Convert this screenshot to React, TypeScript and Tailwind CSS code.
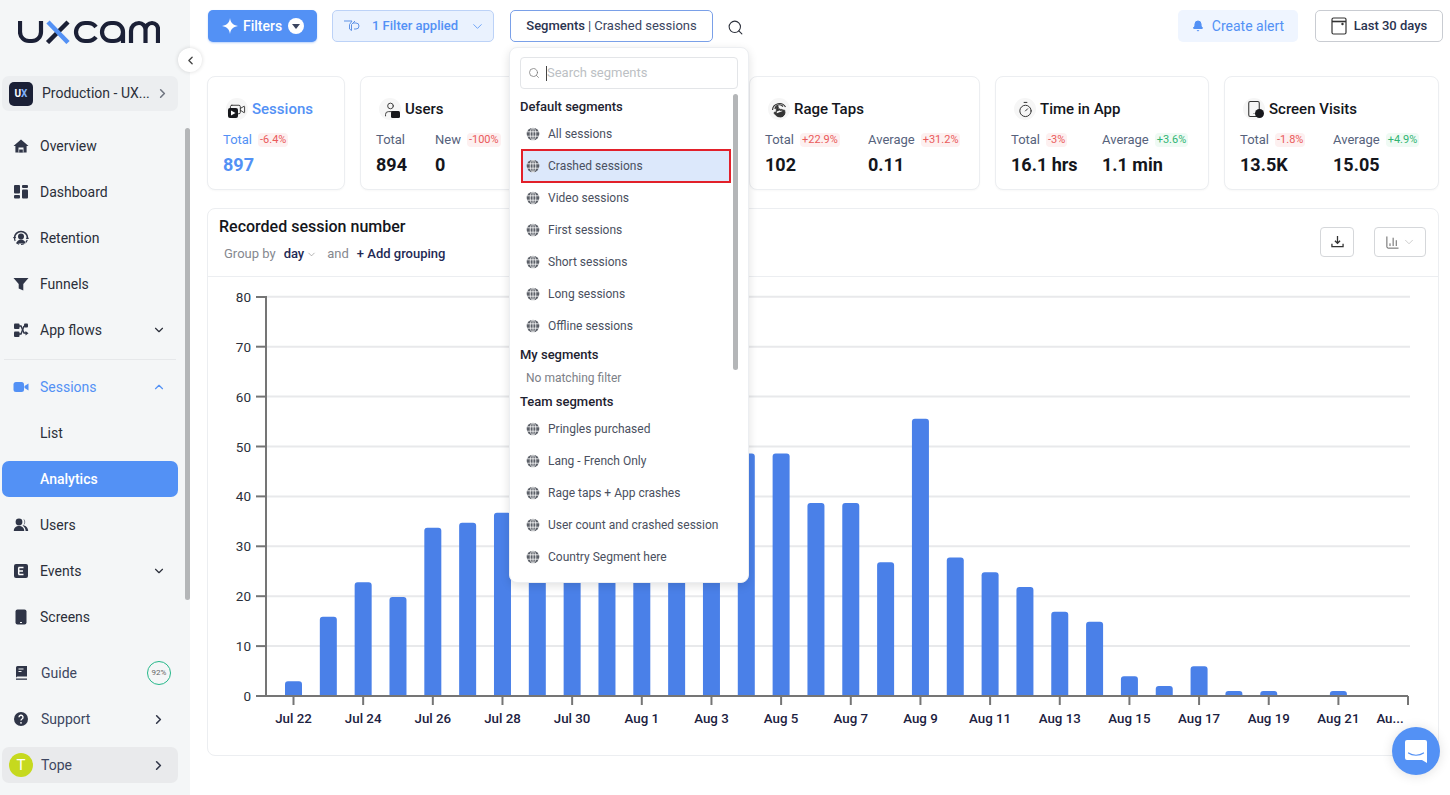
import React from "react";
import { ChevronRight, ChevronDown, ChevronUp, ChevronLeft, Search, Bell, Video, User, Timer, Smartphone, ChartColumn, Pointer } from "lucide-react";

const HomeIco = () => (
  <svg width="16" height="16" viewBox="0 0 16 16"><path d="M8 1.500 15.500 8H13.600v6.500H2.400V8H.5z" fill="#2f3547" /><rect x="5.500" y="9.500" width="5" height="5" fill="#f4f6f7" /><rect x="6.200" y="11.500" width="3.600" height="3" fill="#2f3547" /></svg>
);
const DashIco = () => (
  <svg width="16" height="16" viewBox="0 0 16 16" fill="#2f3547"><rect x="1" y="1" width="6" height="8.500" rx="1" /><rect x="1" y="11" width="6" height="3.600" rx="1" /><rect x="9" y="1" width="6" height="3" rx="1" /><rect x="9" y="5.500" width="6" height="9" rx="1" /></svg>
);
const RetIco = () => (
  <svg width="16" height="16" viewBox="0 0 16 16"><path d="M1.500 8a6.500 6.500 0 0 1 13 0" fill="none" stroke="#2f3547" strokeWidth="1.600" /><path d="M1.500 8a6.500 6.500 0 0 0 13 0" fill="none" stroke="#2f3547" strokeWidth="1.200" strokeDasharray="3 2" /><circle cx="8" cy="6.500" r="3" fill="#2f3547" /><path d="M3.500 13.500c.5-3 2.500-4 4.500-4s4 1 4.500 4z" fill="#2f3547" /><path d="M0 7h3.200L1.600 9.500zM12.800 9h3.200l-1.600-2.500z" fill="#2f3547" /></svg>
);
const FunnelIco = () => (
  <svg width="16" height="16" viewBox="0 0 16 16"><path d="M.5 2h15l-5.200 6v6.500l-4.600-2V8z" fill="#2f3547" /></svg>
);
const FlowIco = () => (
  <svg width="16" height="16" viewBox="0 0 16 16" fill="#2f3547"><rect x="1" y="1.500" width="5.500" height="5.500" rx="1" /><rect x="1" y="9.500" width="5.500" height="5.500" rx="1" /><rect x="11" y="1.500" width="4" height="4" rx="1" /><path d="M5 4h3l3 7h2" fill="none" stroke="#2f3547" strokeWidth="1.400" /><path d="M5 12h3l3-8" fill="none" stroke="#2f3547" strokeWidth="1.400" /><path d="M12.500 9l3 2.200-3 2.200z" /></svg>
);
const CamIco = () => (
  <svg width="16" height="16" viewBox="0 0 16 16" fill="#5391f5"><rect x="0.5" y="3" width="10.500" height="10" rx="2.500" /><path d="M11.500 7l4-2.600v7.200l-4-2.600z" /></svg>
);
const UsersIco = () => (
  <svg width="16" height="16" viewBox="0 0 16 16" fill="#2f3547"><circle cx="6" cy="5" r="3.400" /><path d="M0.800 14c0-3.300 2.300-5 5.200-5s5.200 1.700 5.200 5z" /><path d="M10 1.800a3.400 3.400 0 0 1 0 6.400c2.800.6 5 2 5.200 5.800h-2.600c0-2.300-1-4-3-5.500a4 4 0 0 0 .4-6.700z" /></svg>
);
const EventIco = () => (
  <svg width="16" height="16" viewBox="0 0 16 16"><rect x="1" y="1" width="14" height="14" rx="2" fill="#2f3547" /><path d="M5.500 4.500h5M5.500 8h4.500M5.500 11.500h5M5.700 4.500v7" stroke="#fff" strokeWidth="1.500" fill="none" /></svg>
);
const ScreenIco = () => (
  <svg width="16" height="16" viewBox="0 0 16 16"><rect x="2.500" y="0.500" width="11" height="15" rx="2" fill="#2f3547" /><rect x="7" y="13" width="2" height="1" fill="#f4f6f7" /></svg>
);
const BookIco = () => (
  <svg width="16" height="16" viewBox="0 0 16 16"><path d="M3 2.500A1.500 1.500 0 0 1 4.500 1H14v10.500H4.500A1.500 1.500 0 0 0 3 13z" fill="#2f3547" /><rect x="3" y="13.500" width="11" height="1.300" fill="#2f3547" /><path d="M5.500 4h5M5.500 6.500h3" stroke="#f4f6f7" strokeWidth="1.100" /></svg>
);
const HelpIco = () => (
  <svg width="16" height="16" viewBox="0 0 16 16"><circle cx="8" cy="8" r="7" fill="#2f3547" /><path d="M6 6.300a2 2 0 1 1 3 1.700c-.7.400-1 .8-1 1.600" stroke="#fff" strokeWidth="1.400" fill="none" /><circle cx="8" cy="11.800" r=".9" fill="#fff" /></svg>
);
const Globe = () => (
  <svg width="14" height="14" viewBox="0 0 14 14" className="shrink-0"><circle cx="7" cy="7" r="6.300" fill="#5c6068" /><ellipse cx="7" cy="7" rx="2.800" ry="6.300" fill="none" stroke="#fff" strokeWidth=".8" /><path d="M.7 4.800h12.600M.7 9.200h12.600M7 .7v12.600" stroke="#fff" strokeWidth=".8" /></svg>
);

const Logo = () => (
  <svg width="142" height="24" viewBox="0 0 142 24" fill="none" strokeWidth="4.200">
    <path d="M2 1v11a9 9 0 0 0 9 9h3a9 9 0 0 0 9-9V1" stroke="#1b2036" />
    <path d="M29.500 22.500 50 2" stroke="#1b2036" strokeWidth="4.500" />
    <path d="M30 2l20 20.500" stroke="#5391f5" strokeWidth="4.500" />
    <path d="M78 7a10 9 0 0 0-8-4h-3a9 9 0 0 0 0 18h3a10 9 0 0 0 8-4" stroke="#1b2036" />
    <path d="M105 12a9 9 0 0 0-9-9h-3a9 9 0 0 0 0 18h3a9 9 0 0 0 9-9v11" stroke="#1b2036" />
    <path d="M113 23V11a8 8 0 0 1 8-8a6.500 6.500 0 0 1 6.500 6.500V23M127.500 9.500a6.500 6.500 0 0 1 6.500-6.500a6 6 0 0 1 6 6.500V23" stroke="#1b2036" />
  </svg>
);

function NavRow({ icon, label, trail, active, accent, tall }: { icon?: React.ReactNode; label: string; trail?: React.ReactNode; active?: boolean; accent?: boolean; tall?: boolean }) {
  return (
    <div className="h-[46px] py-[5px] pl-[2px] pr-[12px]">
      <div className={`flex h-[36px] items-center rounded-[7px] pl-[11px] pr-[12px] ${active ? "bg-[#5391f5]" : ""}`}>
        <span className="flex w-[16px] shrink-0 justify-center">{icon}</span>
        <span className={`${tall ? "ml-[12px]" : "ml-[11px]"} flex-1 text-[14px] ${active ? "font-medium text-white" : accent ? "text-[#5391f5]" : tall ? "text-[#3d4660]" : "text-[#2b2f3a]"}`}>{label}</span>
        {trail}
      </div>
    </div>
  );
}

function Metric({ label, value, delta, w, blue }: { label: string; value: string; delta?: string; w: string; blue?: boolean }) {
  const up = delta?.startsWith("+3.6") || delta?.startsWith("+4.9");
  return (
    <div className={w}>
      <div className="flex h-[20px] items-center gap-[6px]">
        <span className={`text-[13px] ${blue ? "text-[#5391f5]" : "text-[#56627c]"}`}>{label}</span>
        {delta ? <span className={`rounded-[4px] px-[2px] text-[11px] leading-[14px] ${up ? "bg-[#effaf4] text-[#2fb573]" : "bg-[#fdf0f0] text-[#ea5a5a]"}`}>{delta}</span> : null}
      </div>
      <div className={`mt-[3px] whitespace-nowrap text-[18px] font-bold leading-[24px] ${blue ? "text-[#5391f5]" : "text-[#14161c]"}`}>{value}</div>
    </div>
  );
}

function Card({ w, icon, title, blue, children }: { w: string; icon: React.ReactNode; title: string; blue?: boolean; children: React.ReactNode }) {
  return (
    <div className={`${w} h-[114px] shrink-0 rounded-[8px] border border-[#eceef1] bg-white pl-[15px] pt-[21px] shadow-[0_1px_2px_rgba(0,0,0,0.03)]`}>
      <div className="flex h-[22px] items-center">
        <span className="ml-[3px] flex h-[22px] w-[22px] items-center justify-center rounded-full bg-[#f6f6f6]">{icon}</span>
        <span className={`ml-[4px] text-[15px] font-medium ${blue ? "text-[#5391f5]" : "text-[#14161c]"}`}>{title}</span>
      </div>
      <div className="mt-[10px] flex">{children}</div>
    </div>
  );
}

function SegRow({ label, selected }: { label: string; selected?: boolean }) {
  return (
    <div className={`flex items-center text-[12px] text-[#4a5060] ${selected ? "-my-[1px] ml-[1px] mr-[7px] h-[34px] border-2 border-[#e2202a] bg-[#dce8fb] pl-[3px]" : "h-[32px] pl-[6px]"}`}>
      <Globe />
      <span className="ml-[8px]">{label}</span>
    </div>
  );
}

const values = [3, 16, 23, 20, 34, 35, 37, 37, 38, 40, 40, 42, 44, 49, 49, 39, 39, 27, 56, 28, 25, 22, 17, 15, 4, 2, 6, 1, 1, 0, 1];
const labels = ["Jul 22", "Jul 24", "Jul 26", "Jul 28", "Jul 30", "Aug 1", "Aug 3", "Aug 5", "Aug 7", "Aug 9", "Aug 11", "Aug 13", "Aug 15", "Aug 17", "Aug 19", "Aug 21"];

function Chart() {
  const y = (v: number) => 696 - v * 4.99;
  const by = (v: number) => 696 - v * 4.95;
  const x = (i: number) => 293.5 + i * 34.83;
  return (
    <svg width="1230" height="478" viewBox="208 277 1230 478" className="block">
      {[10, 20, 30, 40, 50, 60, 70, 80].map((v) => (
        <line key={v} x1="266" x2="1410" y1={y(v)} y2={y(v)} stroke="#e8e9eb" strokeWidth="2" />
      ))}
      {values.map((v, i) =>
        v > 0 ? <path key={i} d={`M${x(i) - 8.5} 696V${by(v) + 3}a3 3 0 0 1 3-3h11a3 3 0 0 1 3 3V696z`} fill="#4a80e8" /> : null
      )}
      <path d="M256 297H266V696M256 696H1408" fill="none" stroke="#757575" strokeWidth="2" />
      {[10, 20, 30, 40, 50, 60, 70].map((v) => (
        <line key={v} x1="256" x2="266" y1={y(v)} y2={y(v)} stroke="#757575" strokeWidth="2" />
      ))}
      {[0, 10, 20, 30, 40, 50, 60, 70, 80].map((v) => (
        <text key={v} x="251" y={y(v) + 5} textAnchor="end" fontSize="13.5" fill="#2b2f3a">{v}</text>
      ))}
      {labels.map((l, i) => (
        <g key={l}>
          <line x1={x(i * 2)} x2={x(i * 2)} y1="696" y2="705" stroke="#757575" strokeWidth="2" />
          <text x={x(i * 2)} y="723" textAnchor="middle" fontSize="13.3" fontWeight="500" fill="#1c2140">{l}</text>
        </g>
      ))}
      <line x1="1408" x2="1408" y1="696" y2="705" stroke="#757575" strokeWidth="2" />
      <text x="1390" y="723" textAnchor="middle" fontSize="13.3" fontWeight="500" fill="#1c2140">Au...</text>
    </svg>
  );
}

const SessionIcon = () => (
  <span className="relative flex h-[18px] w-[18px] items-center justify-center">
    <Video size={17} strokeWidth={1.3} className="text-[#333]" />
    <span className="absolute bottom-0 left-0 flex h-[10px] w-[10px] items-center justify-center rounded-[2px] bg-[#17181c]">
      <svg width="6" height="6" viewBox="0 0 6 6"><path d="M1 .5 5.500 3 1 5.500z" fill="#fff" /></svg>
    </span>
  </span>
);
const UserIcon = () => (
  <span className="relative flex h-[18px] w-[18px] items-center justify-center">
    <User size={17} strokeWidth={1.3} className="text-[#333]" />
    <span className="absolute -right-[1px] bottom-0 h-[7px] w-[9px] rounded-[1.5px] bg-[#17181c]" />
  </span>
);
const RageIcon = () => (
  <span className="relative flex h-[20px] w-[20px] items-center justify-center">
    <svg width="20" height="20" viewBox="0 0 20 20" fill="none" stroke="#333" className="absolute inset-0"><path d="M3.500 11a7 7 0 0 1 13 -3" strokeWidth="1.200" /><path d="M6 10a4.500 4.500 0 0 1 8-2.500" strokeWidth="1.200" /></svg>
    <Pointer size={13} fill="#333" strokeWidth={1.2} className="relative mt-[5px] text-[#333]" />
  </span>
);

export default function App() {
  return (
    <div className="relative flex h-[795px] w-[1450px] overflow-hidden bg-white font-[Roboto,sans-serif]">
      <aside className="w-[190px] shrink-0 bg-[#f4f6f7] pt-[20px]">
        <div className="pl-[18px]"><Logo /></div>
        <div className="ml-[2px] mt-[32px] flex h-[35px] w-[176px] items-center rounded-[7px] bg-[#eceef0] pl-[7px] pr-[8px]">
          <span className="flex h-[24px] w-[24px] items-center justify-center rounded-[5px] bg-[#1b2036] text-[10px] font-bold text-white">U<span className="text-[#7fb0fa]">X</span></span>
          <span className="ml-[9px] flex-1 text-[14px] text-[#2b2f3a]">Production - UX...</span>
          <ChevronRight size={15} strokeWidth={2.5} className="text-[#6f7480]" />
        </div>
        <div className="mt-[12px]">
          <NavRow icon={<HomeIco />} label="Overview" />
          <NavRow icon={<DashIco />} label="Dashboard" />
          <NavRow icon={<RetIco />} label="Retention" />
          <NavRow icon={<FunnelIco />} label="Funnels" />
          <NavRow icon={<FlowIco />} label="App flows" trail={<ChevronDown size={14} strokeWidth={2} className="text-[#2b2f3a]" />} />
          <div className="mx-[4px] mb-[4px] mt-[6px] h-[1px] w-[172px] bg-[#e6e8ea]" />
          <NavRow icon={<CamIco />} label="Sessions" accent trail={<ChevronUp size={14} strokeWidth={2} className="text-[#5391f5]" />} />
          <NavRow label="List" />
          <NavRow label="Analytics" active />
          <NavRow icon={<UsersIco />} label="Users" />
          <NavRow icon={<EventIco />} label="Events" trail={<ChevronDown size={14} strokeWidth={2} className="text-[#2b2f3a]" />} />
          <NavRow icon={<ScreenIco />} label="Screens" />
          <div className="h-[10px]" />
          <NavRow icon={<BookIco />} label="Guide" tall trail={
            <span className="-mr-[5px] flex h-[24px] w-[24px] items-center justify-center rounded-full border-[1.5px] border-[#25b88a] text-[8px] text-[#666]">92%</span>
          } />
          <NavRow icon={<HelpIco />} label="Support" tall trail={<ChevronRight size={15} strokeWidth={2.5} className="text-[#2f3547]" />} />
          <div className="h-[46px] py-[5px] pl-[2px] pr-[12px]">
            <div className="flex h-[36px] items-center rounded-[7px] bg-[#e9eaec] pl-[7px] pr-[12px]">
              <span className="flex h-[24px] w-[24px] items-center justify-center rounded-full bg-[#c6d91e] text-[15px] text-white">T</span>
              <span className="ml-[8px] flex-1 text-[14px] text-[#3d4660]">Tope</span>
              <ChevronRight size={15} strokeWidth={2.5} className="text-[#2f3547]" />
            </div>
          </div>
        </div>
      </aside>

      <main className="min-w-0 flex-1 pl-[17px] pt-[10px]">
        <div className="flex h-[32px] items-center pl-[1px] pr-[7px]">
          <button className="flex h-[32px] w-[109px] items-center rounded-[5px] bg-[#5391f5] pl-[14px] text-[14px] font-medium text-white shadow-[0_1px_2px_rgba(83,145,245,0.4)]">
            <svg width="16" height="16" viewBox="0 0 16 16"><path d="M8 0c.6 4.600 2.600 6.800 8 8-5.400 1.200-7.400 3.400-8 8-.6-4.600-2.600-6.800-8-8 5.400-1.200 7.400-3.400 8-8z" fill="#fff" /></svg>
            <span className="ml-[5px]">Filters</span>
            <span className="ml-[6px] flex h-[16px] w-[16px] items-center justify-center rounded-full bg-white">
              <svg width="8" height="5" viewBox="0 0 8 5"><path d="M0 0h8L4 5z" fill="#3b4560" /></svg>
            </span>
          </button>
          <button className="ml-[15px] flex h-[32px] w-[162px] items-center whitespace-nowrap rounded-[5px] border border-[#bcd2f7] bg-[#eaf2fe] pl-[10px] text-[13px] font-medium text-[#5391f5]">
            <svg width="17" height="14" viewBox="0 0 17 14" fill="none" stroke="#5f93e6" strokeWidth="1"><path d="M1 2h8l-2.500 3.500V10l2 1.500V5.500L12 2" /><path d="M10 4h3a3 3 0 0 1 3 3 3 3 0 0 1-3 3h-2" /></svg>
            <span className="ml-[12px]">1 Filter applied</span>
            <ChevronDown size={15} strokeWidth={1.3} className="ml-[12px] text-[#5391f5]" />
          </button>
          <button className="ml-[16px] flex h-[32px] w-[203px] items-center justify-center rounded-[5px] border border-[#7aa0e8] bg-white text-[13px] text-[#3b4560]">
            <span className="font-medium text-[#2a3350]">Segments</span><span className="mx-[3px]">|</span><span>Crashed sessions</span>
          </button>
          <Search size={17} strokeWidth={1.5} className="ml-[14px] mt-[3px] text-[#2b2f3a]" />
          <div className="flex-1" />
          <button className="flex h-[32px] w-[120px] items-center justify-center rounded-[5px] bg-[#eff5ff] text-[14px] text-[#5391f5]">
            <Bell size={12} fill="#5391f5" className="mr-[8px]" />Create alert
          </button>
          <button className="ml-[17px] flex h-[32px] w-[128px] items-center justify-center rounded-[5px] border border-[#c9ccd2] bg-white text-[13px] font-medium text-[#2a3350]">
            <svg width="16" height="18" viewBox="0 0 16 18" fill="none" stroke="#333" strokeWidth="1.2" className="mr-[7px]"><rect x="1" y="1" width="14" height="16" rx="1.5" /><path d="M1 4.500h14" strokeWidth="1.6" /><circle cx="11.5" cy="7" r=".6" fill="#333" /></svg>
            Last 30 days
          </button>
        </div>

        <div className="mt-[34px] flex gap-[15px]">
          <Card w="w-[138px]" icon={<SessionIcon />} title="Sessions" blue>
            <Metric w="w-[100px]" label="Total" value="897" delta="-6.4%" blue />
          </Card>
          <Card w="w-[166px]" icon={<UserIcon />} title="Users">
            <Metric w="w-[59px]" label="Total" value="894" />
            <Metric w="w-[90px]" label="New" value="0" delta="-100%" />
          </Card>
          <Card w="w-[193px]" icon={<span />} title=""><span /></Card>
          <Card w="w-[231px]" icon={<RageIcon />} title="Rage Taps">
            <Metric w="w-[103px]" label="Total" value="102" delta="+22.9%" />
            <Metric w="w-[110px]" label="Average" value="0.11" delta="+31.2%" />
          </Card>
          <Card w="w-[214px]" icon={<Timer size={17} strokeWidth={1.4} className="text-[#333]" />} title="Time in App">
            <Metric w="w-[91px]" label="Total" value="16.1 hrs" delta="-3%" />
            <Metric w="w-[100px]" label="Average" value="1.1 min" delta="+3.6%" />
          </Card>
          <Card w="w-[215px]" icon={
            <span className="relative flex h-[18px] w-[18px] items-center justify-center">
              <Smartphone size={18} strokeWidth={1.4} className="text-[#333]" />
              <span className="absolute -right-[1px] bottom-0 h-[9px] w-[9px] rounded-full bg-[#17181c]" />
            </span>
          } title="Screen Visits">
            <Metric w="w-[93px]" label="Total" value="13.5K" delta="-1.8%" />
            <Metric w="w-[100px]" label="Average" value="15.05" delta="+4.9%" />
          </Card>
        </div>

        <section className="mt-[18px] h-[548px] w-[1232px] rounded-[8px] border border-[#eceef1] bg-white">
          <header className="flex h-[68px] border-b border-[#eceef1] pl-[11px] pr-[12px]">
            <div className="flex-1 pt-[8px]">
              <h2 className="text-[16px] font-medium leading-[20px] text-[#14161c]">Recorded session number</h2>
              <div className="ml-[5px] mt-[8px] flex items-center text-[13px] leading-[18px] text-[#85888f]">
                <span>Group by</span>
                <span className="ml-[8px] font-medium text-[#1f2a55]">day</span>
                <ChevronDown size={11} strokeWidth={1.2} className="ml-[2px] text-[#777]" />
                <span className="ml-[10px]">and</span>
                <span className="ml-[8px] font-medium text-[#1f2a55]">+ Add grouping</span>
              </div>
            </div>
            <div className="flex items-start pt-[18px]">
              <span className="flex h-[30px] w-[34px] items-center justify-center rounded-[4px] border border-[#d5d7da]">
                <svg width="13" height="12" viewBox="0 0 15 14" fill="none" stroke="#333" strokeWidth="1.5"><path d="M7.500 0v8M4.500 5.500l3 3 3-3" /><path d="M1 9v3.500h13V9" /></svg>
              </span>
              <span className="ml-[20px] flex h-[30px] w-[52px] items-center justify-center rounded-[4px] border border-[#d5d7da]">
                <ChartColumn size={15} strokeWidth={1.2} className="text-[#333]" />
                <ChevronDown size={14} strokeWidth={1} className="ml-[2px] text-[#aaa]" />
              </span>
            </div>
          </header>
          <Chart />
        </section>
      </main>

      <div className="absolute left-[178px] top-[48px] flex h-[24px] w-[24px] items-center justify-center rounded-full bg-white shadow-[0_0_4px_rgba(0,0,0,0.15)]">
        <ChevronLeft size={13} strokeWidth={2.5} className="text-[#444]" />
      </div>
      <div className="absolute left-[185px] top-[128px] h-[472px] w-[5px] rounded-full bg-[#b4b6b8]" />

      <div className="absolute left-[509px] top-[47px] h-[536px] w-[240px] rounded-[8px] border border-[#eceef1] bg-white px-[10px] pt-[9px] shadow-[0_3px_10px_rgba(0,0,0,0.12)]">
        <div className="flex h-[32px] items-center rounded-[4px] border border-[#e3e5e8] pl-[7px]">
          <Search size={12} strokeWidth={1.5} className="text-[#777]" />
          <span className="ml-[6px] h-[15px] w-[1px] bg-[#444]" />
          <span className="text-[13px] text-[#bcbfc4]">Search segments</span>
        </div>
        <div className="mt-[8px] h-[20px] text-[13px] font-medium leading-[20px] text-[#1e2230]">Default segments</div>
        <div className="mt-[1px]">
          <SegRow label="All sessions" />
          <SegRow label="Crashed sessions" selected />
          <SegRow label="Video sessions" />
          <SegRow label="First sessions" />
          <SegRow label="Short sessions" />
          <SegRow label="Long sessions" />
          <SegRow label="Offline sessions" />
        </div>
        <div className="mt-[3px] h-[20px] text-[13px] font-medium leading-[20px] text-[#1e2230]">My segments</div>
        <div className="ml-[6px] mt-[3px] h-[20px] text-[12px] leading-[20px] text-[#7d8087]">No matching filter</div>
        <div className="mt-[4px] h-[20px] text-[13px] font-medium leading-[20px] text-[#1e2230]">Team segments</div>
        <div className="mt-[1px]">
          <SegRow label="Pringles purchased" />
          <SegRow label="Lang - French Only" />
          <SegRow label="Rage taps + App crashes" />
          <SegRow label="User count and crashed session" />
          <SegRow label="Country Segment here" />
        </div>
        <div className="absolute left-[223px] top-[46px] h-[276px] w-[5px] rounded-full bg-[#b4b6b8]" />
      </div>

      <div className="absolute left-[1392px] top-[727px] flex h-[48px] w-[48px] items-center justify-center rounded-full bg-[#5391f5] shadow-[0_1px_12px_rgba(0,0,0,0.12)]">
        <svg width="24" height="25" viewBox="0 0 24 25"><path d="M3 1h18a2 2 0 0 1 2 2v21l-5-3H3a2 2 0 0 1-2-2V3a2 2 0 0 1 2-2z" fill="#fff" /><path d="M4.500 14c4 3 11 3 15 0" stroke="#5391f5" strokeWidth="1.2" fill="none" strokeLinecap="round" /></svg>
      </div>
    </div>
  );
}
